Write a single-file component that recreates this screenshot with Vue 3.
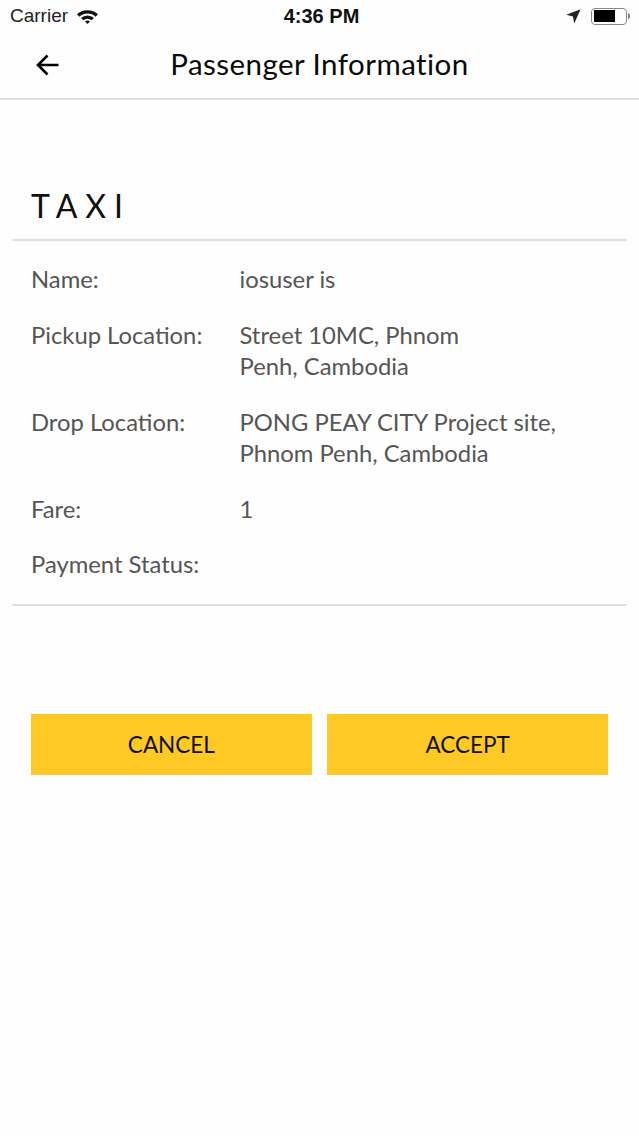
<template>
  <div class="screen">
    <div class="status-bar">
      <div class="status-left">
        <span class="carrier">Carrier</span>
        <svg class="wifi" width="23" height="15" viewBox="0 0 24 17" preserveAspectRatio="none">
          <path d="M1 6 A15.5 15.5 0 0 1 23 6 L20.4 8.7 A11.8 11.8 0 0 0 3.6 8.7 Z" fill="#111" />
          <path d="M5.2 10.2 A9.5 9.5 0 0 1 18.8 10.2 L16.2 12.8 A5.8 5.8 0 0 0 7.8 12.8 Z" fill="#111" />
          <path d="M9.4 14.3 A3.7 3.7 0 0 1 14.6 14.3 L12 17 Z" fill="#111" />
        </svg>
      </div>
      <span class="clock">4:36 PM</span>
      <div class="status-right">
        <svg class="arrow-loc" width="15" height="15" viewBox="0 0 15 15">
          <path d="M0.3 5.8 L14.6 0.3 L8.2 14.6 L7 7.4 Z" fill="#222" />
        </svg>
        <div class="battery"><div class="battery-fill"></div></div>
        <div class="battery-cap"></div>
      </div>
    </div>

    <header class="nav">
      <svg class="back" width="26" height="24" viewBox="0 0 26 24">
        <path d="M23.5 12 H3 M12.5 2.5 L3 12 L12.5 21.5" fill="none" stroke="#000" stroke-width="2.6" />
      </svg>
      <h1 class="nav-title">Passenger Information</h1>
    </header>

    <h2 class="service">TAXI</h2>

    <section class="details">
      <div v-for="row in rows" :key="row.label" class="row">
        <div class="label">{{ row.label }}</div>
        <div class="value">{{ row.value }}</div>
      </div>
    </section>

    <div class="actions">
      <button class="action">CANCEL</button>
      <button class="action">ACCEPT</button>
    </div>
  </div>
</template>

<script setup>
const rows = [
  { label: 'Name:', value: 'iosuser is' },
  { label: 'Pickup Location:', value: 'Street 10MC, Phnom\nPenh, Cambodia' },
  { label: 'Drop Location:', value: 'PONG PEAY CITY Project site,\nPhnom Penh, Cambodia' },
  { label: 'Fare:', value: '1' },
  { label: 'Payment Status:', value: '' },
];
</script>

<style>
html,
body {
  margin: 0;
  background: #fff;
}
</style>

<style scoped>
.screen {
  width: 639px;
  height: 1136px;
  background: #fefefe;
  font-family: Lato, "Noto Sans", sans-serif;
  overflow: hidden;
}

.status-bar {
  height: 34px;
  padding: 0 9px 2px 10px;
  box-sizing: border-box;
  display: flex;
  align-items: center;
  justify-content: space-between;
  position: relative;
  font-family: "Liberation Sans", sans-serif;
  color: #111;
}

.status-left {
  display: flex;
  align-items: center;
  gap: 8px;
}

.carrier {
  font-size: 19px;
  color: #222;
}

.clock {
  position: absolute;
  left: 4px;
  right: 0;
  text-align: center;
  font-size: 20px;
  font-weight: 700;
}

.status-right {
  display: flex;
  align-items: center;
  gap: 10px;
}

.battery {
  width: 36px;
  height: 17px;
  box-sizing: border-box;
  border: 1.5px solid #888;
  border-radius: 4px;
  padding: 1.5px;
}

.battery-fill {
  width: 70%;
  height: 100%;
  background: #000;
}

.battery-cap {
  width: 2px;
  height: 6px;
  margin-left: -9px;
  background: #888;
  border-radius: 0 2px 2px 0;
}

.nav {
  height: 66px;
  box-sizing: border-box;
  padding-bottom: 5px;
  border-bottom: 2px solid #e0e0e0;
  display: flex;
  align-items: center;
  justify-content: center;
  position: relative;
}

.back {
  position: absolute;
  left: 35px;
  top: 19px;
}

.nav-title {
  margin: 0;
  font-size: 29.5px;
  font-weight: 400;
  color: #0a0a0a;
  letter-spacing: 0.45px;
}

.service {
  margin: 0;
  padding: 85px 0 0 31px;
  height: 54px;
  font-size: 32px;
  line-height: 42px;
  font-weight: 400;
  letter-spacing: 8px;
  color: #111;
}

.details {
  margin: 0 12px;
  padding: 23px 19px 23px;
  border-top: 2px solid #e0e0e0;
  border-bottom: 2px solid #e0e0e0;
  display: flex;
  flex-direction: column;
  gap: 24px;
  color: #555;
}

.row {
  display: flex;
  font-size: 23.8px;
  line-height: 31.5px;
}

.label {
  width: 208.5px;
  flex-shrink: 0;
}

.value {
  width: 330px;
  min-height: 31.5px;
  white-space: pre-line;
}

.actions {
  margin: 108px 31px 0;
  display: flex;
  gap: 15.5px;
}

.action {
  flex: 1;
  height: 61.5px;
  border: 0;
  padding: 0;
  background: #fec925;
  color: #111;
  font-family: inherit;
  font-size: 22.5px;
}
</style>
